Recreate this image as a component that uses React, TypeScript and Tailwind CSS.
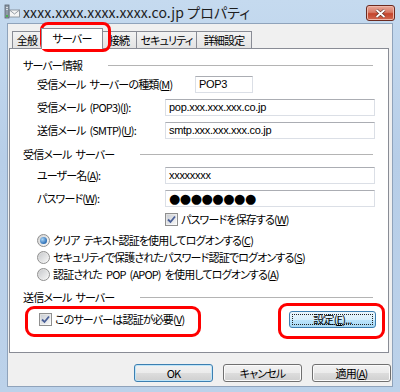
import React from "react";

const F = "font-['Noto_Sans_CJK_JP',sans-serif] [font-feature-settings:'palt']";

function U({ c }: { c: string }) {
  return <span className="underline underline-offset-[1px]">{c}</span>;
}

function S() {
  return <span className="inline-block w-[4px]" />;
}

function Input({ w, children }: { w: string; children?: React.ReactNode }) {
  return (
    <div
      className={`${w} h-[17px] bg-white border border-[#dbdfe6] border-t-[#abadb3] flex items-center pl-[3px] text-[11px] text-black font-['Liberation_Sans',sans-serif] tracking-[-0.3px]`}
    >
      {children}
    </div>
  );
}

function Check() {
  return (
    <div className="w-[13px] h-[13px] border border-[#8f8f8f] bg-[linear-gradient(135deg,#dcdcdc,#ffffff)] flex items-center justify-center shrink-0">
      <div className="w-[9px] h-[9px] bg-[linear-gradient(135deg,#cbcfd5,#f6f6f6)] flex items-center justify-center">
        <svg width="9" height="9" viewBox="0 0 9 9">
          <path d="M1 4.5 L3.5 7 L8 1.5" stroke="#4a5f97" strokeWidth="1.8" fill="none" />
        </svg>
      </div>
    </div>
  );
}

function Radio({ on }: { on?: boolean }) {
  return (
    <div className="w-[13px] h-[13px] rounded-full border border-[#8f8f8f] bg-[linear-gradient(135deg,#d2d2d2,#fbfbfb)] flex items-center justify-center shrink-0">
      {on ? (
        <div className="w-[7px] h-[7px] rounded-full bg-[radial-gradient(circle_at_35%_35%,#a8d4f6,#2d6fb6_70%,#1c4f8a)]" />
      ) : (
        <div className="w-[9px] h-[9px] rounded-full bg-[linear-gradient(135deg,#c9cbce,#f4f4f4)]" />
      )}
    </div>
  );
}

function Header({ children }: { children: React.ReactNode }) {
  return (
    <div className="h-[16px] flex items-center pl-[13px] pr-[15px]">
      <span className="whitespace-nowrap">{children}</span>
      <div className="flex-1 ml-[26px] h-px bg-[#b4b4b4]" />
    </div>
  );
}

function Btn({ children, kind }: { children: React.ReactNode; kind?: "def" | "focus" }) {
  if (kind === "focus") {
    return (
      <div className="w-[87px] h-[17px] rounded-[3px] border border-[#3c7fb1] bg-[linear-gradient(to_bottom,#eaf6fd_0%,#d9f0fc_50%,#bee6fd_50%,#a7d9f5_100%)] p-[2px]">
        <div className="w-full h-full border border-dotted border-[#222] flex items-center justify-center leading-none">
          {children}
        </div>
      </div>
    );
  }
  return (
    <div
      className={`w-[79px] h-[18px] rounded-[3px] border ${
        kind === "def" ? "border-[#3c7fb1] shadow-[inset_0_0_0_1px_#bfe5f8]" : "border-[#707070] shadow-[inset_0_0_0_1px_#fbfbfb]"
      } bg-[linear-gradient(to_bottom,#f2f2f2_0%,#ebebeb_50%,#dddddd_50%,#cfcfcf_100%)] flex items-center justify-center leading-none`}
    >
      {children}
    </div>
  );
}

export default function App() {
  return (
    <div className={`relative w-[400px] h-[392px] bg-[linear-gradient(to_bottom,#c5daef,#b7cee8_40%,#bcd2ea)] flex flex-col ${F} text-[11px] tracking-[-0.85px] text-black overflow-hidden`}>
      {/* title bar */}
      <div className="h-[23px] flex items-center shrink-0 relative">
        <svg className="ml-[4px] mt-[1px]" width="16" height="16" viewBox="0 0 16 16">
          <rect x="1" y="1" width="4" height="13" fill="#8e9aa6" stroke="#5a6470" strokeWidth="0.8" />
          <rect x="2" y="3" width="2" height="1" fill="#d8dee4" />
          <rect x="2" y="5" width="2" height="1" fill="#d8dee4" />
          <rect x="5.5" y="6" width="10" height="7" fill="#f4f4f4" stroke="#7d8790" strokeWidth="0.8" />
          <path d="M5.5 6 L10.5 10 L15.5 6" stroke="#7d8790" strokeWidth="0.8" fill="none" />
          <rect x="2" y="11" width="2" height="2" fill="#4caf50" />
        </svg>
        <span className="ml-[3px] text-[14px] text-[#1e1e1e] tracking-[0.1px] mt-[1px] whitespace-nowrap">
          xxxx.xxxx.xxxx.xxxx.co.jp プロパティ
        </span>
        <div className="absolute right-[5px] top-[5px] w-[29px] h-[16px] rounded-[3px] border border-[#6b2a20] bg-[linear-gradient(to_bottom,#e9a99b_0%,#d87a66_45%,#c4442c_55%,#d26a52_100%)] shadow-[inset_0_0_0_1px_#f0b8ab] flex items-center justify-center">
          <svg width="11" height="9" viewBox="0 0 11 9">
            <path d="M1.5 1 L9.5 8 M9.5 1 L1.5 8" stroke="#5a2a20" strokeWidth="3" />
            <path d="M1.5 1 L9.5 8 M9.5 1 L1.5 8" stroke="#ffffff" strokeWidth="1.8" />
          </svg>
        </div>
      </div>

      {/* body */}
      <div className="flex-1 mx-[7px] mb-[5px] border border-[#8fa3bb] bg-[#f0f0f0] flex flex-col">
        {/* tabs */}
        <div className="h-[24px] flex items-end pl-[4px] shrink-0">
          <div className="w-[30px] h-[17px] border border-b-0 border-[#898c95] bg-[linear-gradient(to_bottom,#f3f3f3,#e3e3e3)] flex items-center justify-center">
            全般
          </div>
          <div className="w-[62px] h-[21px] -mx-[1px] border border-b-0 border-[#898c95] bg-white relative z-10 -mb-px flex items-center justify-center pb-[1px]">
            サーバー
          </div>
          <div className="w-[35px] h-[17px] border border-b-0 border-l-0 border-[#898c95] bg-[linear-gradient(to_bottom,#f3f3f3,#e3e3e3)] flex items-center justify-center">
            接続
          </div>
          <div className="w-[60px] h-[17px] border border-b-0 border-l-0 border-[#898c95] bg-[linear-gradient(to_bottom,#f3f3f3,#e3e3e3)] flex items-center justify-center whitespace-nowrap">
            セキュリティ
          </div>
          <div className="w-[55px] h-[17px] border border-b-0 border-l-0 border-[#898c95] bg-[linear-gradient(to_bottom,#f3f3f3,#e3e3e3)] flex items-center justify-center whitespace-nowrap">
            詳細設定
          </div>
        </div>

        {/* panel */}
        <div className="ml-[1px] w-[380px] h-[305px] shrink-0 border border-[#898c95] bg-white flex flex-col pt-[8px]">
          <Header>サーバー情報</Header>
          <div className="flex flex-col gap-[6px] mt-[3px] pl-[27px]">
            <div className="flex items-center">
              <div className="w-[158px] whitespace-nowrap">
                受信メール<S />サーバーの種類(<U c="M" />)
              </div>
              <Input w="w-[58px]">POP3</Input>
            </div>
            <div className="flex items-center">
              <div className="w-[128px] whitespace-nowrap">
                受信メール<S />(POP3)(<U c="I" />):
              </div>
              <Input w="w-[210px]">pop.xxx.xxx.xxx.co.jp</Input>
            </div>
            <div className="flex items-center">
              <div className="w-[128px] whitespace-nowrap">
                送信メール<S />(SMTP)(<U c="U" />):
              </div>
              <Input w="w-[210px]">smtp.xxx.xxx.xxx.co.jp</Input>
            </div>
          </div>

          <div className="mt-[7px]">
            <Header>
              受信メール<S />サーバー
            </Header>
          </div>
          <div className="flex flex-col gap-[6px] mt-[5px] pl-[27px]">
            <div className="flex items-center">
              <div className="w-[128px] whitespace-nowrap">
                ユーザー名(<U c="A" />):
              </div>
              <Input w="w-[210px]">xxxxxxxx</Input>
            </div>
            <div className="flex items-center">
              <div className="w-[128px] whitespace-nowrap">
                パスワード(<U c="W" />):
              </div>
              <Input w="w-[210px]">
                <span className="text-[13px] tracking-[-0.5px] leading-none font-['DejaVu_Sans',sans-serif]">●●●●●●●●</span>
              </Input>
            </div>
          </div>
          <div className="h-[16px] mt-[4px] flex items-center gap-[3px] pl-[155px]">
            <Check />
            <span className="whitespace-nowrap">
              パスワードを保存する(<U c="W" />)
            </span>
          </div>
          <div className="flex flex-col mt-[5px] pl-[27px]">
            <div className="h-[17px] flex items-center gap-[3px]">
              <Radio on />
              <span className="whitespace-nowrap">
                クリア<S />テキスト認証を使用してログオンする(<U c="C" />)
              </span>
            </div>
            <div className="h-[17px] flex items-center gap-[3px]">
              <Radio />
              <span className="whitespace-nowrap">
                セキュリティで保護されたパスワード認証でログオンする(<U c="S" />)
              </span>
            </div>
            <div className="h-[17px] flex items-center gap-[3px]">
              <Radio />
              <span className="whitespace-nowrap">
                認証された<S />POP<S />(APOP)<S />を使用してログオンする(<U c="A" />)
              </span>
            </div>
          </div>

          <div className="mt-[6px]">
            <Header>
              送信メール<S />サーバー
            </Header>
          </div>
          <div className="h-[18px] mt-[5px] flex items-center pl-[29px] pr-[12px]">
            <Check />
            <span className="ml-[3px] whitespace-nowrap">
              このサーバーは認証が必要(<U c="V" />)
            </span>
            <div className="flex-1" />
            <Btn kind="focus">
              設定(<U c="E" />)...
            </Btn>
          </div>
        </div>

        {/* buttons */}
        <div className="flex justify-end gap-[10px] mt-[11px] pr-[1px]">
          <Btn kind="def">OK</Btn>
          <Btn>キャンセル</Btn>
          <Btn>
            適用(<U c="A" />)
          </Btn>
        </div>
      </div>

      {/* annotation overlays */}
      <div className="absolute left-[40px] top-[22px] w-[71px] h-[30px] rounded-[8px] border-[3px] border-[#ff0000] pointer-events-none" />
      <div className="absolute left-[25px] top-[306px] w-[176px] h-[31px] rounded-[9px] border-[3px] border-[#ff0000] pointer-events-none" />
      <div className="absolute left-[278px] top-[303px] w-[107px] h-[36px] rounded-[9px] border-[3px] border-[#ff0000] pointer-events-none" />
    </div>
  );
}
